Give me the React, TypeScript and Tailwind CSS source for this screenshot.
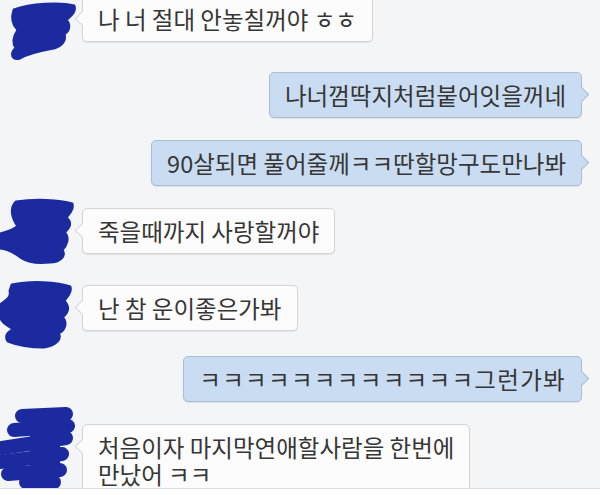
import React from 'react';

type Side = 'left' | 'right';

interface Msg {
  side: Side;
  lines: string[];
  mt: number;
  avatar?: number;
  wide?: boolean;
}

const messages: Msg[] = [
  { side: 'left', lines: ['나 너 절대 안놓칠꺼야 ㅎㅎ'], mt: -4, avatar: 0 },
  { side: 'right', lines: ['나너껌딱지처럼붙어잇을꺼네'], mt: 30 },
  { side: 'right', lines: ['90살되면 풀어줄께ㅋㅋ딴할망구도만나봐'], mt: 22 },
  { side: 'left', lines: ['죽을때까지 사랑할꺼야'], mt: 22, avatar: 1 },
  { side: 'left', lines: ['난 참 운이좋은가봐'], mt: 31, avatar: 2 },
  { side: 'right', lines: ['ㅋㅋㅋㅋㅋㅋㅋㅋㅋㅋㅋㅋ그런가봐'], mt: 25, wide: true },
  { side: 'left', lines: ['처음이자 마지막연애할사람을 한번에', '만났어 ㅋㅋ'], mt: 22, avatar: 3 },
];

// scribbled-over profile pictures
const Scribble: React.FC<{ kind: number }> = ({ kind }) => {
  const blue = '#1b2b9f';
  if (kind === 0) {
    return (
      <svg width="82" height="80" viewBox="0 -10 82 80" className="absolute left-0 top-[-10px]">
        <path
          d="M14 14 C30 8, 60 6, 74 10 C76 16, 70 20, 66 24 C70 28, 70 34, 64 38 C66 44, 62 50, 54 52 C44 54, 30 56, 20 62 C12 64, 10 58, 16 52 C12 46, 14 40, 18 34 C12 28, 12 20, 14 14 Z"
          fill={blue}
          stroke={blue}
          strokeWidth="3"
          strokeLinejoin="round"
        />
      </svg>
    );
  }
  if (kind === 1) {
    return (
      <svg width="82" height="80" viewBox="0 -10 82 80" className="absolute left-0 top-[-10px]">
        <path
          d="M16 -6 C35 -9, 60 -8, 72 -4 C74 2, 68 6, 66 10 C72 14, 70 20, 64 24 C70 30, 66 38, 62 42 C66 48, 60 54, 50 54 C40 55, 28 54, 22 50 C14 44, 6 40, 0 40 L0 26 C8 24, 14 22, 18 18 C12 10, 10 0, 16 -6 Z"
          fill={blue}
          stroke={blue}
          strokeWidth="3"
          strokeLinejoin="round"
        />
      </svg>
    );
  }
  if (kind === 2) {
    return (
      <svg width="82" height="80" viewBox="0 -10 82 80" className="absolute left-0 top-[-10px]">
        <path
          d="M12 0 C30 -4, 58 -3, 70 2 C72 8, 66 12, 64 16 C70 22, 68 28, 62 32 C68 38, 64 46, 58 48 C62 54, 56 60, 44 62 C30 62, 18 60, 8 56 C4 50, 10 46, 14 44 C6 40, 0 36, 0 30 L0 20 C6 16, 12 12, 10 6 Z"
          fill={blue}
          stroke={blue}
          strokeWidth="3"
          strokeLinejoin="round"
        />
      </svg>
    );
  }
  return (
    <svg width="82" height="90" viewBox="0 -20 82 90" className="absolute left-0 top-[-20px]">
      <g stroke={blue} strokeWidth="14" strokeLinecap="round" fill="none">
        <path d="M22 -8 L66 -10" />
        <path d="M14 6 L68 2" />
        <path d="M2 24 L66 14" />
        <path d="M0 38 L62 30" />
        <path d="M8 50 L60 46" />
        <path d="M26 58 L54 58" />
      </g>
      <path d="M30 -4 L60 -4 L60 50 L30 54 Z" fill={blue} />
    </svg>
  );
};

const Bubble: React.FC<{ side: Side; lines: string[]; wide?: boolean }> = ({ side, lines, wide }) => {
  const isLeft = side === 'left';
  return (
    <div
      className={`relative w-fit rounded-[5px] border px-[15px] py-[8.5px] text-[23.5px] leading-[27px] text-[#363636] whitespace-nowrap shadow-[0_1px_1px_rgba(0,0,0,0.08)] ${
        isLeft ? 'bg-[#fcfcfc] border-[#d3d5d8]' : 'bg-[#c9dcf1] border-[#a8bdd6]'
      } ${wide ? 'tracking-[1.3px]' : ''}`}
    >
      <span
        className={`absolute top-[16px] h-[11px] w-[11px] rotate-45 ${
          isLeft
            ? 'left-[-6px] bg-[#fcfcfc] border-l border-b border-[#d3d5d8]'
            : 'right-[-6px] bg-[#c9dcf1] border-r border-t border-[#a8bdd6]'
        }`}
      />
      {lines.map((l, i) => (
        <div key={i} className="relative">{l}</div>
      ))}
    </div>
  );
};

export default function App() {
  return (
    <div
      className="w-[600px] h-[495px] overflow-hidden bg-white flex flex-col"
      style={{ fontFamily: '"Noto Sans CJK KR", "Noto Sans", sans-serif' }}
    >
      <div className="h-[489px] shrink-0 overflow-hidden bg-[#f4f5f7] border-b border-[#dcdde0] flex flex-col">
        {messages.map((m, i) => (
          <div
            key={i}
            className={`flex shrink-0 ${m.side === 'left' ? 'justify-start' : 'justify-end pr-[18px]'}`}
            style={{ marginTop: m.mt }}
          >
            {m.side === 'left' && (
              <div className="relative w-[82px] shrink-0">
                {m.avatar !== undefined && <Scribble kind={m.avatar} />}
              </div>
            )}
            <Bubble side={m.side} lines={m.lines} wide={m.wide} />
          </div>
        ))}
      </div>
    </div>
  );
}
